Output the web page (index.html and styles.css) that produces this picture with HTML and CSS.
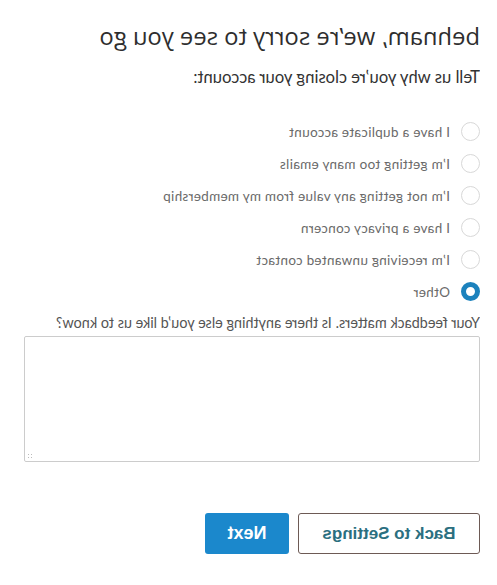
FILE: index.html
```html
<!DOCTYPE html>
<html lang="en">
<head>
    <meta charset="UTF-8">
    <meta name="viewport" content="width=device-width, initial-scale=1.0">
    <title>Close account</title>
    <link rel="stylesheet" href="styles.css">
</head>
<body>
    <div class="page">
        <h1 class="title">behnam, we’re sorry to see you go</h1>
        <p class="lead">Tell us why you’re closing your account:</p>

        <div class="reasons">
            <label class="reason"><span class="radio"></span>I have a duplicate account</label>
            <label class="reason"><span class="radio"></span>I’m getting too many emails</label>
            <label class="reason"><span class="radio"></span>I’m not getting any value from my membership</label>
            <label class="reason"><span class="radio"></span>I have a privacy concern</label>
            <label class="reason"><span class="radio"></span>I’m receiving unwanted contact</label>
            <label class="reason"><span class="radio checked"></span>Other</label>
        </div>

        <p class="feedback-label">Your feedback matters. Is there anything else you’d like us to know?</p>
        <div class="feedback"><span class="grip"></span></div>

        <div class="actions">
            <button class="btn btn-back">Back to Settings</button>
            <button class="btn btn-next">Next</button>
        </div>
    </div>
</body>
</html>
```

FILE: styles.css
```css
html, body {
    margin: 0;
    background: #fff;
}
.page {
    width: 497px;
    height: 585px;
    box-sizing: border-box;
    padding: 21px 24px 0 17px;
    font-family: Lato, "Open Sans", sans-serif;
    color: #333;
    transform: scaleX(-1); /* the screen is shown mirrored */
}
.title {
    margin: 0;
    font-family: "Open Sans", sans-serif;
    font-weight: 500;
    font-size: 23.8px;
    line-height: 30px;
    color: #2e2e2e;
}
.lead {
    margin: 16px 0 0;
    font-size: 16.7px;
    line-height: 21px;
    color: #333;
}
.reasons {
    margin-top: 34px;
    display: flex;
    flex-direction: column;
    gap: 12.6px;
}
.reason {
    display: flex;
    align-items: center;
    gap: 11px;
    height: 19.4px;
    font-size: 13.5px;
    letter-spacing: 0.3px;
    color: #6a6a6a;
}
.radio {
    width: 19px;
    height: 19px;
    border: 1px solid #d8d8d8;
    border-radius: 50%;
    box-sizing: border-box;
    flex: none;
}
.radio.checked {
    border: 5px solid #1c82bd;
    background: #fff;
}
.feedback-label {
    margin: 12px 0 0;
    font-size: 14.4px;
    line-height: 19px;
    color: #555;
}
.feedback {
    margin-top: 4px;
    height: 124px;
    border: 1px solid #ccc;
    border-radius: 2px;
    position: relative;
}
.grip {
    position: absolute;
    right: 2px;
    bottom: 2px;
    width: 6px;
    height: 6px;
    background: radial-gradient(circle, #bbb 0.8px, transparent 1px) 0 0 / 3px 3px;
}
.actions {
    margin-top: 51px;
    display: flex;
    gap: 9px;
}
.btn {
    height: 41px;
    border-radius: 3px;
    font-family: "Liberation Sans", Arial, sans-serif;
    font-weight: 700;
    cursor: pointer;
}
.btn-back {
    width: 182px;
    background: #fff;
    border: 1px solid #6d5a55;
    color: #2b6f80;
    font-size: 17px;
}
.btn-next {
    width: 84px;
    background: #1b88cc;
    border: none;
    color: #fff;
    font-size: 18px;
}
```
